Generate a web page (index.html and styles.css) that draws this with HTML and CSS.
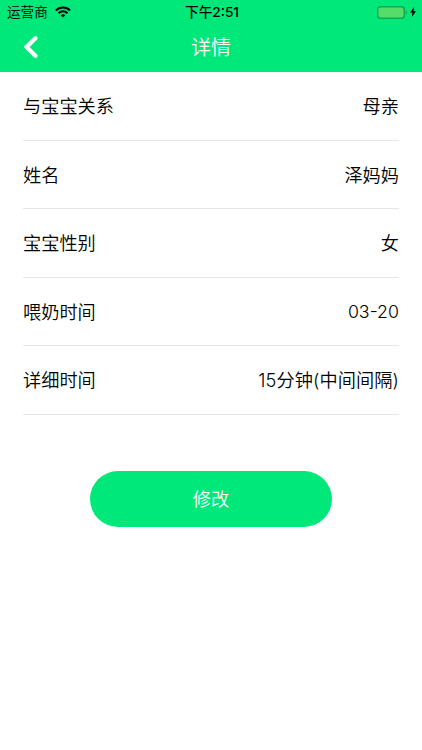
FILE: index.html
```html
<!DOCTYPE html>
<html lang="zh-CN">

<head>
    <meta charset="UTF-8">
    <meta name="viewport" content="width=device-width, initial-scale=1.0">
    <title>详情</title>
    <link rel="stylesheet" href="styles.css">
</head>

<body>
    <header class="header">
        <div class="status-bar">
            <div class="carrier">
                <span>运营商</span>
                <svg class="wifi" viewBox="0 0 16 12" width="16" height="12">
                    <path d="M0.9 4.5a10 10 0 0 1 14.2 0M3.5 7.2a6.4 6.4 0 0 1 9 0" fill="none" stroke="#000" stroke-width="2" />
                    <path d="M8 11.6L5.7 9.3a3.3 3.3 0 0 1 4.6 0z" />
                </svg>
            </div>
            <div class="clock">下午2:51</div>
            <div class="power">
                <svg class="battery" viewBox="0 0 31 13" width="31" height="13">
                    <rect x="0.75" y="0.75" width="26.5" height="11.5" rx="2.8" fill="#55dc69" stroke="#0cab57" stroke-width="1.5" />
                    <path d="M28.7 4.5c1.5 0.6 1.5 3.4 0 4z" fill="#0a9c50" />
                </svg>
                <svg class="bolt" viewBox="0 0 6 10" width="6" height="10">
                    <path d="M4.2 0L0 5.5h2.5L1.8 10l4.2-5.7H3.5z" />
                </svg>
            </div>
        </div>
        <nav class="nav">
            <button class="back" aria-label="返回">
                <svg viewBox="0 0 14 24" width="14" height="24">
                    <path d="M11.4 3.3L2.6 12l8.8 8.7" fill="none" stroke="#fff" stroke-width="4.4" stroke-linecap="round" />
                </svg>
            </button>
            <h1>详情</h1>
        </nav>
    </header>

    <main class="content">
        <ul class="info-list">
            <li><span>与宝宝关系</span><span>母亲</span></li>
            <li><span>姓名</span><span>泽妈妈</span></li>
            <li><span>宝宝性别</span><span>女</span></li>
            <li><span>喂奶时间</span><span class="date">03-20</span></li>
            <li><span>详细时间</span><span class="duration">15分钟(中间间隔)</span></li>
        </ul>
        <button class="edit">修改</button>
    </main>
</body>

</html>
```

FILE: styles.css
```css
* {
    box-sizing: border-box;
    margin: 0;
    padding: 0;
}

body {
    min-height: 100vh;
    background: #fff;
    color: #000;
    font-family: Inter, "Noto Sans CJK SC", sans-serif;
}

button {
    border: none;
    background: none;
    font-family: inherit;
    cursor: pointer;
}

.header {
    height: 72px;
    background: #00e87a;
}

.status-bar {
    display: grid;
    grid-template-columns: 1fr auto 1fr;
    align-items: center;
    height: 24px;
    padding: 0 6px 0 7px;
    font-size: 13.6px;
    line-height: 24px;
}

.carrier,
.power {
    display: flex;
    align-items: center;
}

.carrier {
    gap: 7px;
    font-weight: 350;
}

.clock {
    padding-left: 1px;
    font-size: 13.7px;
    font-weight: 500;
}

.power {
    justify-content: flex-end;
    gap: 2px;
}

.nav {
    display: grid;
    grid-template-columns: 60px 1fr 60px;
    align-items: center;
    height: 46px;
}

.back {
    display: flex;
    padding-left: 24px;
}

.nav h1 {
    padding-bottom: 1px;
    color: #fff;
    font-size: 20px;
    font-weight: 350;
    text-align: center;
}

.info-list {
    padding: 0 23px;
    list-style: none;
}

.info-list li {
    display: flex;
    justify-content: space-between;
    align-items: center;
    height: 68.5px;
    padding-bottom: 1.5px;
    border-bottom: 1px solid #e6e6e6;
    font-size: 18.2px;
    font-weight: 350;
}

.info-list .date {
    padding-top: 1px;
    font-size: 17.8px;
}

.info-list .duration {
    letter-spacing: 0.1px;
}

.edit {
    display: block;
    width: 242px;
    height: 56px;
    margin: 56px auto 0;
    padding-bottom: 2px;
    border-radius: 28px;
    background: #00e87a;
    color: #fff;
    font-size: 18.2px;
    font-weight: 350;
}
```
